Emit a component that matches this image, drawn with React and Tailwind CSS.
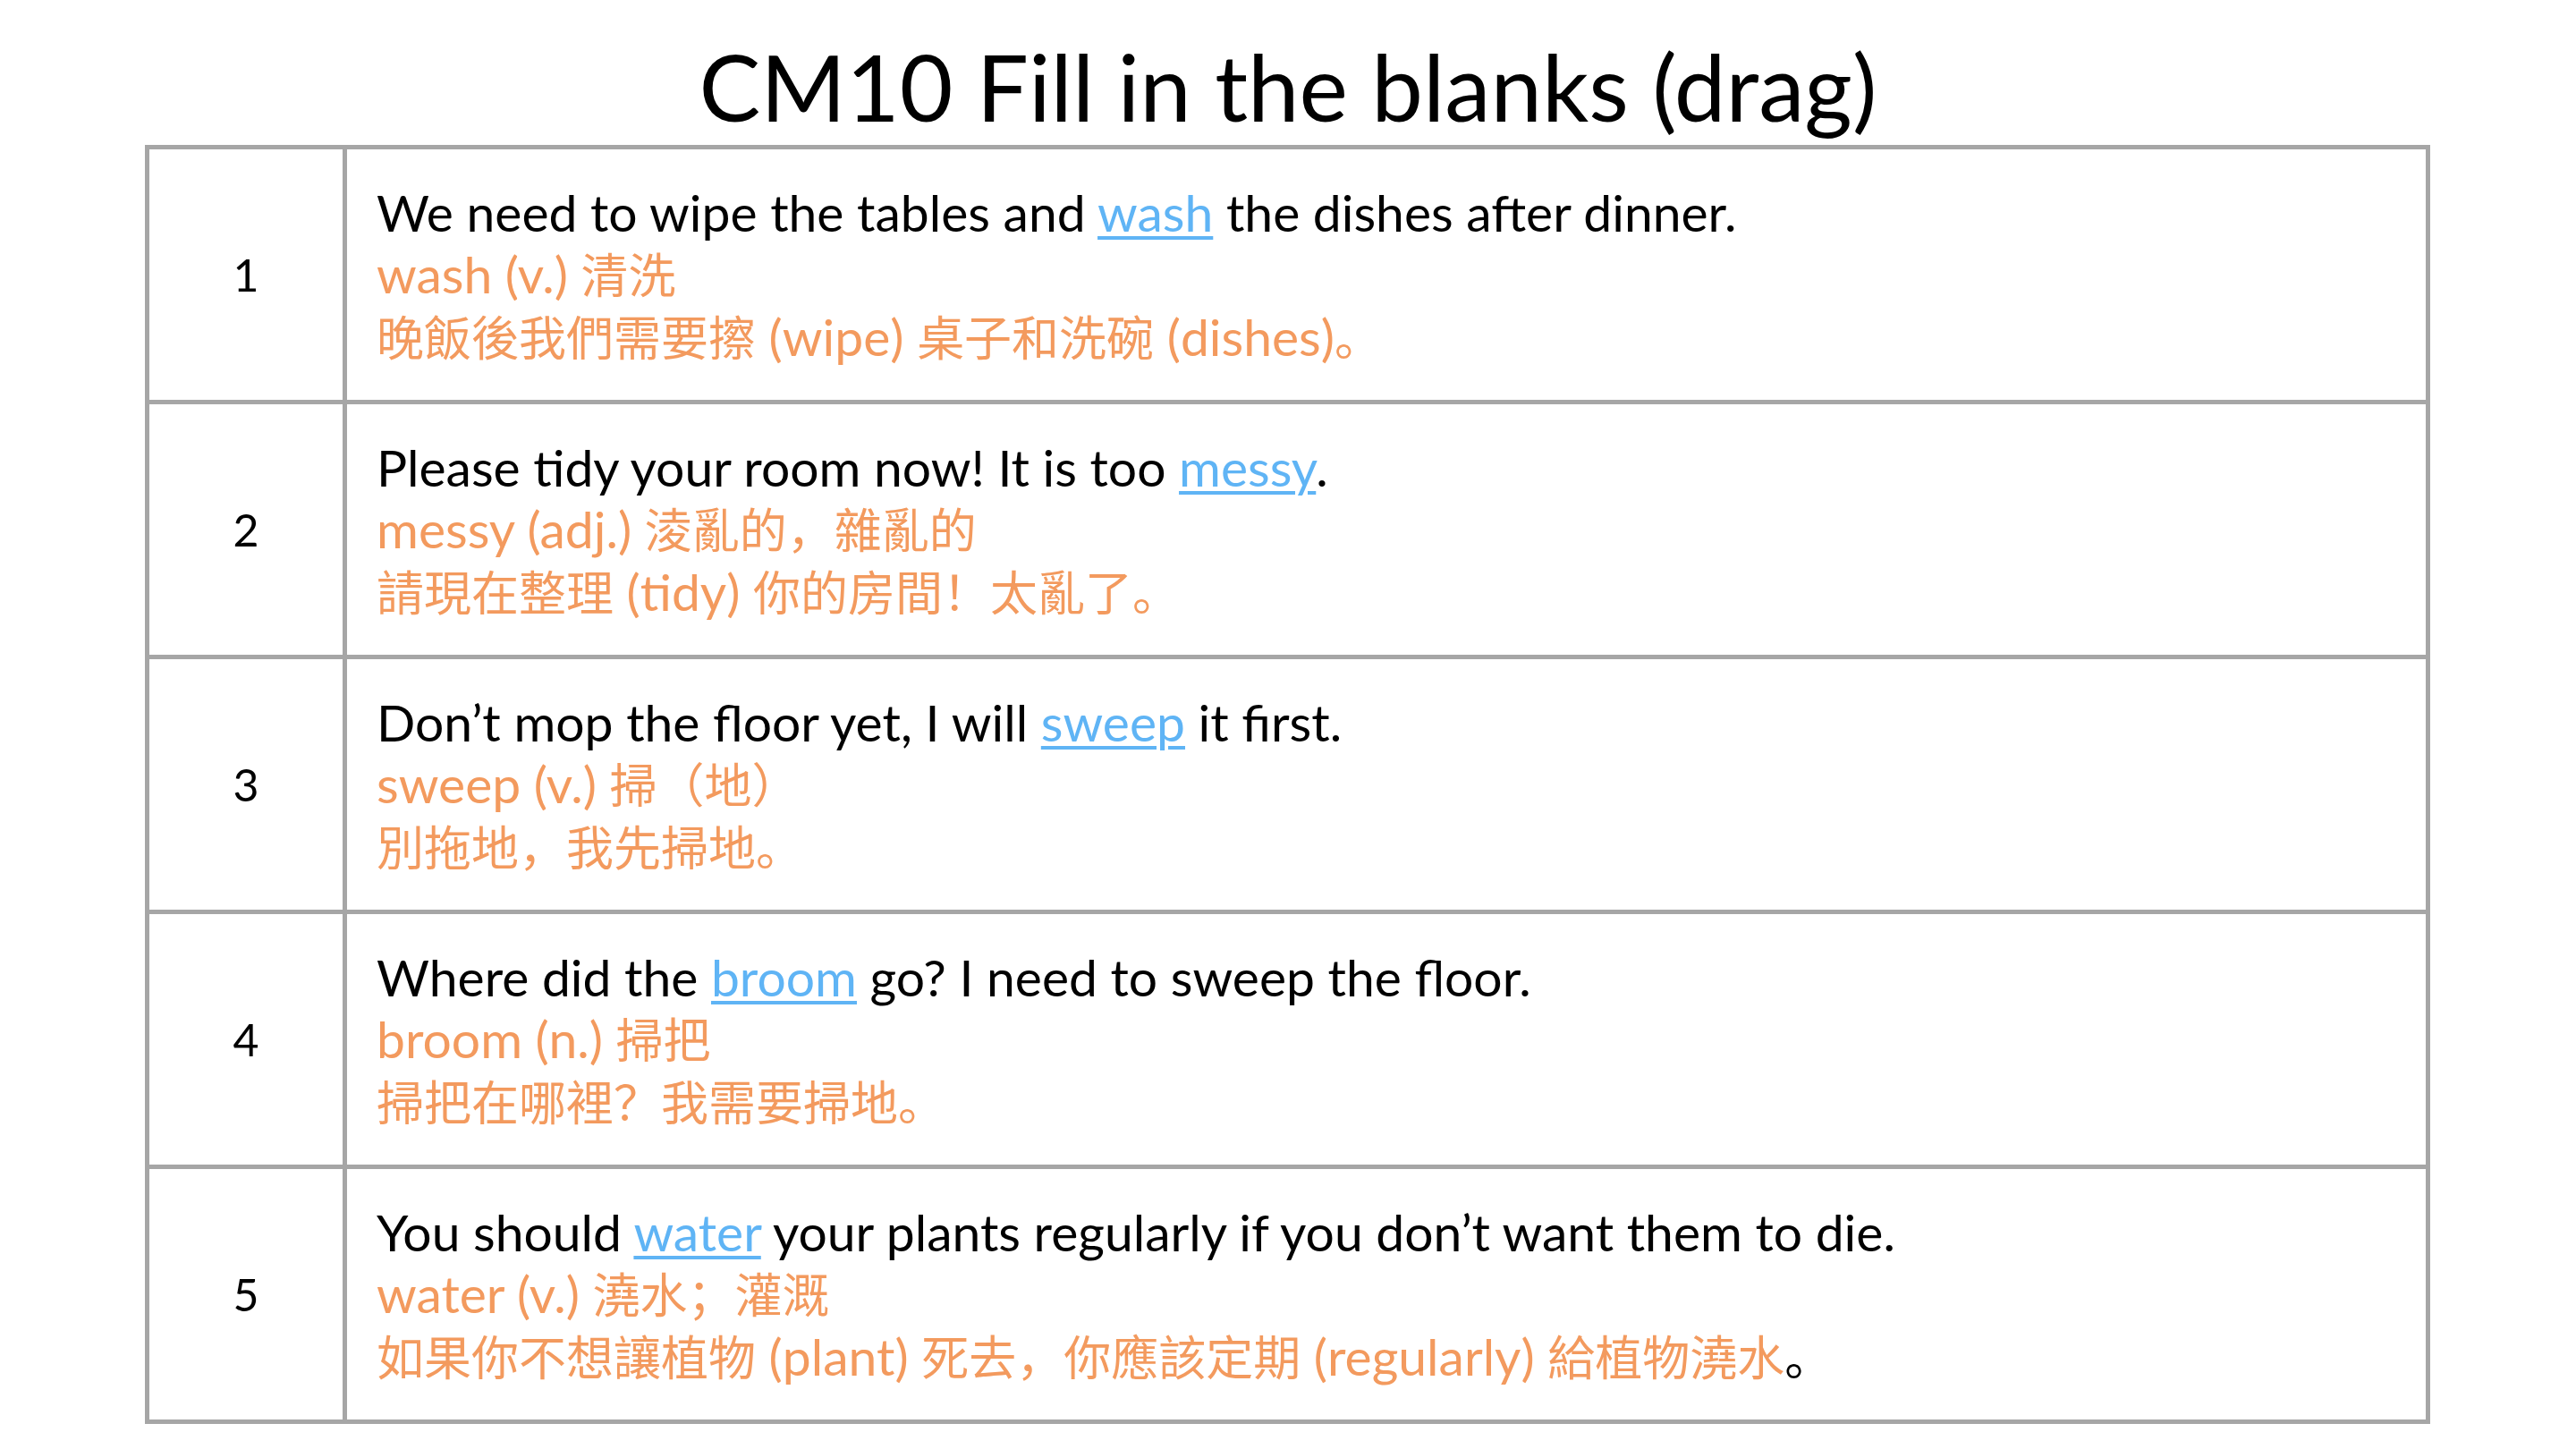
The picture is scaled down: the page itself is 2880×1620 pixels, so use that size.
import React from 'react';

const rows = [
  {
    n: 1,
    before: 'We need to wipe the tables and ',
    word: 'wash',
    after: ' the dishes after dinner.',
    vocab: 'wash (v.) 清洗',
    zh: '晚飯後我們需要擦 (wipe) 桌子和洗碗 (dishes)。',
  },
  {
    n: 2,
    before: 'Please tidy your room now! It is too ',
    word: 'messy',
    after: '.',
    vocab: 'messy (adj.) 淩亂的，雜亂的',
    zh: '請現在整理 (tidy) 你的房間！太亂了。',
  },
  {
    n: 3,
    before: 'Don’t mop the floor yet, I will ',
    word: 'sweep',
    after: ' it first.',
    vocab: 'sweep (v.) 掃（地）',
    zh: '別拖地，我先掃地。',
  },
  {
    n: 4,
    before: 'Where did the ',
    word: 'broom',
    after: ' go? I need to sweep the floor.',
    vocab: 'broom (n.) 掃把',
    zh: '掃把在哪裡？我需要掃地。',
  },
  {
    n: 5,
    before: 'You should ',
    word: 'water',
    after: ' your plants regularly if you don’t want them to die.',
    vocab: 'water (v.) 澆水；灌溉',
    zh: '如果你不想讓植物 (plant) 死去，你應該定期 (regularly) 給植物澆水',
    tail: '。',
  },
];

const font = { fontFamily: '"Lato", "Noto Sans CJK SC", sans-serif' };

// CJK runs are set a touch smaller than the latin text
const Mixed = ({ text }) =>
  text.split(/([\u3000-\u303f\u4e00-\u9fff\uff00-\uffef]+)/).map((part, i) =>
    /[\u3000-\u303f\u4e00-\u9fff\uff00-\uffef]/.test(part) ? (
      <span key={i} className="text-[53px]">{part}</span>
    ) : (
      <React.Fragment key={i}>{part}</React.Fragment>
    )
  );

export default function App() {
  return (
    <div className="w-[2880px] h-[1620px] bg-white text-black" style={font}>
      <div className="h-[162px] flex justify-center pt-[45px]">
        <h1 className="text-[103px] leading-none font-normal">CM10 Fill in the blanks (drag)</h1>
      </div>

      <div className="ml-[162px] w-[2555px] border-[5px] border-[#a6a6a6] flex flex-col">
        {rows.map((r, i) => (
          <div key={r.n} className={`flex ${i > 0 ? 'h-[285px] border-t-[5px] border-[#a6a6a6]' : 'h-[280px]'}`}>
            <div className="w-[216px] shrink-0 flex items-center justify-center text-[50px]">
              {r.n}
            </div>
            <div className="flex-1 border-l-[5px] border-[#a6a6a6] flex flex-col justify-center pl-[33px] text-[57px] leading-[69px]">
              <p>
                {r.before}
                <span className="text-[#5fb4f5] underline decoration-[4px] underline-offset-[5px]">{r.word}</span>
                {r.after}
              </p>
              <p className="text-[#f39a5e]"><Mixed text={r.vocab} /></p>
              <p className="text-[#f39a5e]">
                <Mixed text={r.zh} />
                {r.tail && <span className="text-black text-[53px]">{r.tail}</span>}
              </p>
            </div>
          </div>
        ))}
      </div>
    </div>
  );
}
